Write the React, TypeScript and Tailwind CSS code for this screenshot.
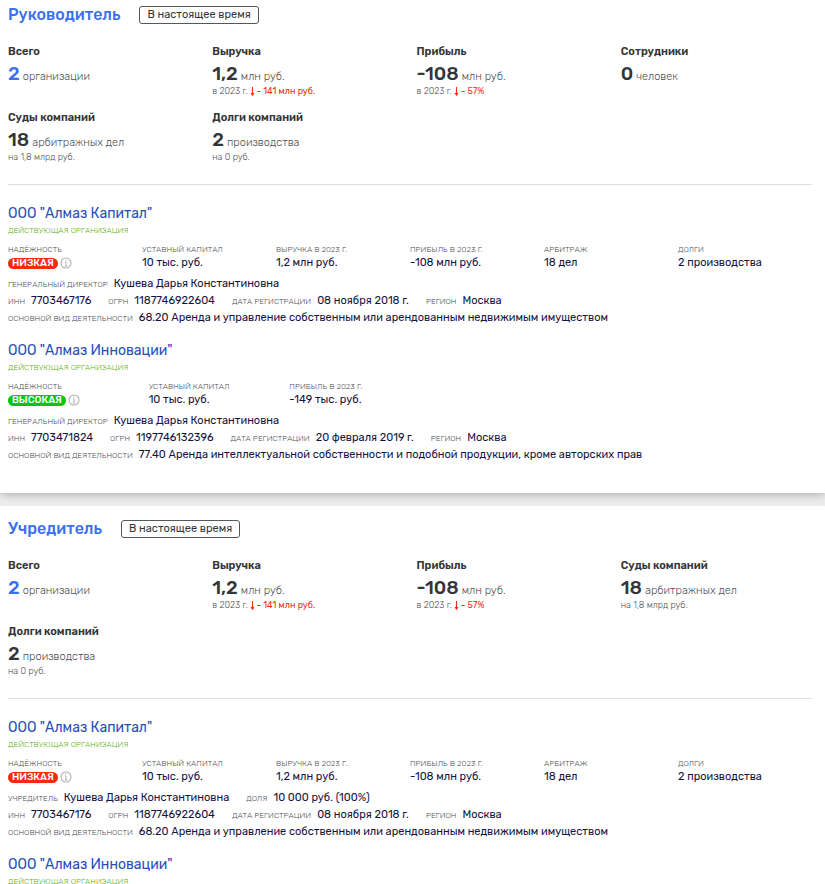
type Stat = {
  label: string;
  value: string;
  unit: string;
  note?: string;
  change?: string;
  link?: boolean;
};

type Field = { label: string; value: string };

type Company = {
  name: string;
  reliability: "high" | "low";
  metrics: Field[];
  rows: Field[][];
};

const revenue: Stat = { label: "Выручка", value: "1,2", unit: "млн руб.", note: "в 2023 г.", change: "- 141 млн руб." };
const profit: Stat = { label: "Прибыль", value: "-108", unit: "млн руб.", note: "в 2023 г.", change: "- 57%" };
const total: Stat = { label: "Всего", value: "2", unit: "организации", link: true };
const courts: Stat = { label: "Суды компаний", value: "18", unit: "арбитражных дел", note: "на 1,8 млрд руб." };
const debts: Stat = { label: "Долги компаний", value: "2", unit: "производства", note: "на 0 руб." };
const staff: Stat = { label: "Сотрудники", value: "0", unit: "человек" };

const person = "Кушева Дарья Константиновна";
const director: Field[] = [{ label: "Генеральный директор", value: person }];

const capital = (head: Field[]): Company => ({
  name: 'ООО "Алмаз Капитал"',
  reliability: "low",
  metrics: [
    { label: "Уставный капитал", value: "10 тыс. руб." },
    { label: "Выручка в 2023 г.", value: "1,2 млн руб." },
    { label: "Прибыль в 2023 г.", value: "-108 млн руб." },
    { label: "Арбитраж", value: "18 дел" },
    { label: "Долги", value: "2 производства" },
  ],
  rows: [
    head,
    [
      { label: "ИНН", value: "7703467176" },
      { label: "ОГРН", value: "1187746922604" },
      { label: "Дата регистрации", value: "08 ноября 2018 г." },
      { label: "Регион", value: "Москва" },
    ],
    [{ label: "Основной вид деятельности", value: "68.20 Аренда и управление собственным или арендованным недвижимым имуществом" }],
  ],
});

const innovations = (head: Field[]): Company => ({
  name: 'ООО "Алмаз Инновации"',
  reliability: "high",
  metrics: [
    { label: "Уставный капитал", value: "10 тыс. руб." },
    { label: "Прибыль в 2023 г.", value: "-149 тыс. руб." },
  ],
  rows: [
    head,
    [
      { label: "ИНН", value: "7703471824" },
      { label: "ОГРН", value: "1197746132396" },
      { label: "Дата регистрации", value: "20 февраля 2019 г." },
      { label: "Регион", value: "Москва" },
    ],
    [{ label: "Основной вид деятельности", value: "77.40 Аренда интеллектуальной собственности и подобной продукции, кроме авторских прав" }],
  ],
});

const founder: Field[] = [
  { label: "Учредитель", value: person },
  { label: "Доля", value: "10 000 руб. (100%)" },
];

function DownArrow() {
  return (
    <svg viewBox="0 0 5 9" className="h-[9px] w-[5px] shrink-0" fill="none" stroke="currentColor">
      <path d="M2.5 0V8M1 6L2.5 8.2L4 6" strokeWidth="1.1" />
    </svg>
  );
}

function InfoIcon() {
  return (
    <svg viewBox="0 0 12 12" className="h-3 w-3" fill="none" stroke="#b0b0b0">
      <circle cx="6" cy="6" r="5" strokeWidth="1.1" />
      <path d="M6 2.6V3.8M5 5H6V9M4.7 9H7.3" strokeWidth="1" />
    </svg>
  );
}

function StatItem({ stat }: { stat: Stat }) {
  return (
    <div className="whitespace-nowrap">
      <h3 className="text-[11px] leading-4 font-semibold text-[#333639]">{stat.label}</h3>
      <p className="mt-[2px] flex items-baseline gap-[3px] text-[11px] leading-4 text-[#4c4e51]">
        {stat.link ? (
          <a href="#organizations" className="text-[19px] leading-6 font-medium text-[#3a70f0]">{stat.value}</a>
        ) : (
          <span className="text-[19px] leading-6 font-medium text-[#333639]">{stat.value}</span>
        )}
        <span className="font-light">{stat.unit}</span>
      </p>
      {stat.note && (
        <p className="flex items-center gap-[2px] text-[9px] leading-[11px] font-light text-[#4c4e51]">
          {stat.note}
          {stat.change && (
            <span className="flex items-center gap-[2px] font-normal text-[#f9290f]">
              <DownArrow /> {stat.change}
            </span>
          )}
        </p>
      )}
    </div>
  );
}

function CompanyCard({ company }: { company: Company }) {
  const high = company.reliability === "high";

  return (
    <article>
      <h3 className="text-[14px] leading-6 text-[#2450b5]">
        <a href="#company">{company.name}</a>
      </h3>
      <p className="text-[8px] leading-[10px] font-light text-[#62ad14] uppercase">Действующая организация</p>

      <dl className={company.metrics.length > 3 ? "mt-[9px] grid grid-cols-6" : "mt-[9px] grid max-w-[422px] grid-cols-3"}>
        <div>
          <dt className="text-[8px] leading-[10px] font-light text-[#4c4e51] uppercase">Надёжность</dt>
          <dd className="flex h-4 items-center gap-[2px]">
            <span className={`rounded-full px-1 text-[10px] leading-[11px] font-medium text-white uppercase ${high ? "bg-[#0bc30b]" : "bg-[#f9290f]"}`}>
              {high ? "Высокая" : "Низкая"}
            </span>
            <button type="button" aria-label="Подробнее о надёжности"><InfoIcon /></button>
          </dd>
        </div>
        {company.metrics.map((m) => (
          <div key={m.label} className="whitespace-nowrap">
            <dt className="text-[8px] leading-[10px] font-light text-[#4c4e51] uppercase">{m.label}</dt>
            <dd className="text-[11px] leading-4 text-[#14123f]">{m.value}</dd>
          </div>
        ))}
      </dl>

      <div className="mt-[5px] flex flex-col gap-px">
        {company.rows.map((row) => (
          <dl key={row[0].label} className="flex flex-wrap gap-x-[17px] text-[11px] leading-4">
            {row.map((f) => (
              <div key={f.label} className="flex items-baseline gap-[6px]">
                <dt className="shrink-0 text-[8px] leading-[10px] font-light text-[#4c4e51] uppercase">{f.label}</dt>
                <dd className="text-[#14123f]">{f.value}</dd>
              </div>
            ))}
          </dl>
        ))}
      </div>
    </article>
  );
}

function RolePanel({ title, stats, companies, className }: { title: string; stats: Stat[]; companies: Company[]; className: string }) {
  return (
    <section className={`bg-white pb-[30px] pl-2 ${className}`}>
      <header className="flex h-5 items-center gap-[19px]">
        <h2 className="text-base leading-5 font-medium text-[#3a70f0]">{title}</h2>
        <button type="button" className="rounded-[3px] border border-[#55585b] px-[7px] text-[11px] leading-4 text-[#333639]">
          В настоящее время
        </button>
      </header>

      <div className="mt-[19px] grid grid-cols-4 gap-y-[13px]">
        {stats.map((s) => (
          <StatItem key={s.label} stat={s} />
        ))}
      </div>

      <div className="mt-[21px] mr-[13px] flex flex-col gap-[13px] border-t border-[#dedede] pt-[17px]">
        {companies.map((c) => (
          <CompanyCard key={c.name} company={c} />
        ))}
      </div>
    </section>
  );
}

export default function App() {
  return (
    <main className="flex flex-col gap-[13px] overflow-hidden bg-[#ededed] font-['Rubik','Roboto',sans-serif]">
      <RolePanel
        title="Руководитель"
        stats={[total, revenue, profit, staff, courts, debts]}
        companies={[capital(director), innovations(director)]}
        className="pt-[5px] shadow-[0_2px_8px_rgba(60,75,90,0.35)]"
      />
      <RolePanel
        title="Учредитель"
        stats={[total, revenue, profit, courts, debts]}
        companies={[capital(founder), innovations(founder)]}
        className="pt-[13px]"
      />
    </main>
  );
}
